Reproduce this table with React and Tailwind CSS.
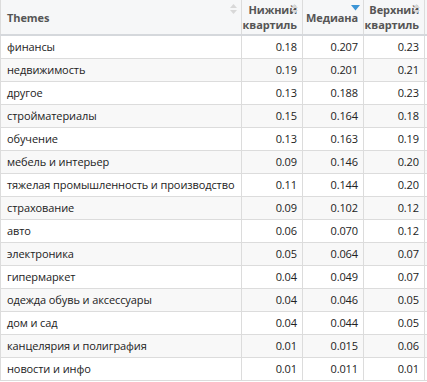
import React from "react";

const rows = [
  ["финансы", "0.18", "0.207", "0.23"],
  ["недвижимость", "0.19", "0.201", "0.21"],
  ["другое", "0.13", "0.188", "0.23"],
  ["стройматериалы", "0.15", "0.164", "0.18"],
  ["обучение", "0.13", "0.163", "0.19"],
  ["мебель и интерьер", "0.09", "0.146", "0.20"],
  ["тяжелая промышленность и производство", "0.11", "0.144", "0.20"],
  ["страхование", "0.09", "0.102", "0.12"],
  ["авто", "0.06", "0.070", "0.12"],
  ["электроника", "0.05", "0.064", "0.07"],
  ["гипермаркет", "0.04", "0.049", "0.07"],
  ["одежда обувь и аксессуары", "0.04", "0.046", "0.05"],
  ["дом и сад", "0.04", "0.044", "0.05"],
  ["канцелярия и полиграфия", "0.01", "0.015", "0.06"],
  ["новости и инфо", "0.01", "0.011", "0.01"],
];

function SortIcon({ active }) {
  if (active) {
    return (
      <svg className="absolute right-[3px] top-[5px]" width="9" height="6" viewBox="0 0 9 6">
        <path d="M0 0 H9 L4.5 5.5 Z" fill="#3c95d6" />
      </svg>
    );
  }
  return (
    <svg className="absolute right-[4px] top-[4px]" width="7" height="10" viewBox="0 0 7 10">
      <path d="M0 4 L3.5 0 L7 4 Z" fill="#d8d8d8" />
      <path d="M0 6 L3.5 10 L7 6 Z" fill="#d8d8d8" />
    </svg>
  );
}

const grid = "grid grid-cols-[242px_61px_61px_61px]";
const hcell = "relative flex items-center border-r border-[#dcdcdc] font-bold leading-[15px]";
const cell = "flex items-center border-r border-[#dcdcdc] whitespace-nowrap overflow-hidden";

export default function App() {
  return (
    <div className="w-[427px] h-[382px] bg-white overflow-hidden font-['Open_Sans','Noto_Sans',sans-serif] text-[11px] tracking-[-0.1px]">
      <div className={`${grid} h-[36px] bg-[#f6f7f8] text-[#555] border-b-2 border-[#d5d8dc]`}>
        <div className={`${hcell} border-l px-[6px]`}>
          Themes
          <SortIcon />
        </div>
        <div className={`${hcell} justify-end text-right px-[5px]`}>
          Нижний квартиль
          <SortIcon />
        </div>
        <div className={`${hcell} justify-end text-right px-[5px]`}>
          Медиана
          <SortIcon active />
        </div>
        <div className={`${hcell} justify-end text-right px-[5px]`}>
          Верхний квартиль
          <SortIcon />
        </div>
      </div>
      <div className="text-[#222]">
        {rows.map((r, i) => (
          <div
            key={r[0]}
            className={`${grid} h-[23px] border-b border-[#dcdcdc] ${i % 2 === 1 ? "bg-[#f8f8f8]" : "bg-white"}`}
          >
            <div className={`${cell} border-l px-[6px]`}>{r[0]}</div>
            <div className={`${cell} justify-end px-[5px]`}>{r[1]}</div>
            <div className={`${cell} justify-end px-[5px]`}>{r[2]}</div>
            <div className={`${cell} justify-end px-[5px]`}>{r[3]}</div>
          </div>
        ))}
      </div>
    </div>
  );
}
